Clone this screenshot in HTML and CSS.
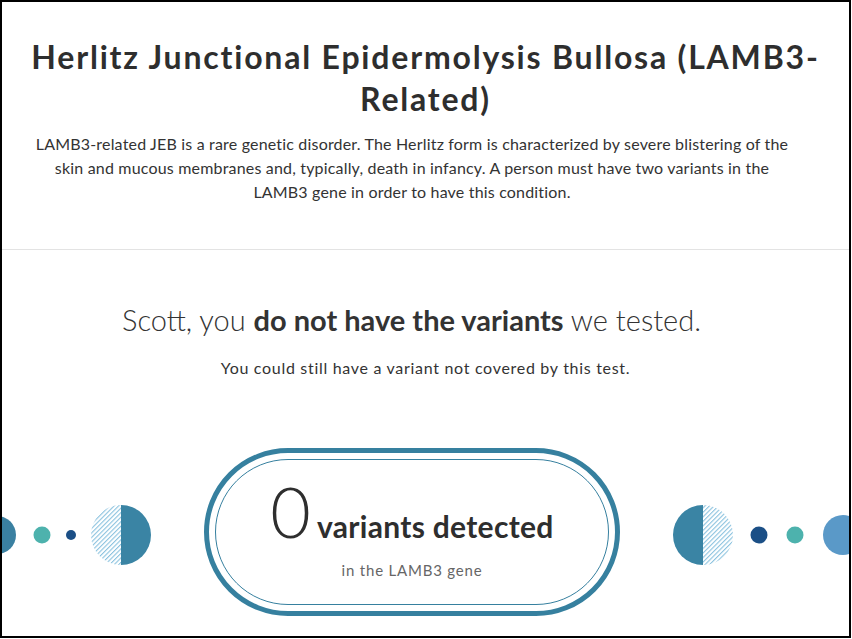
FILE: index.html
```html
<!DOCTYPE html>
<html lang="en">
<head>
<meta charset="utf-8">
<title>Herlitz Junctional Epidermolysis Bullosa</title>
<link rel="stylesheet" href="styles.css">
</head>
<body>
<div class="frame">
  <header class="intro">
    <h1 class="title">Herlitz Junctional Epidermolysis Bullosa (LAMB3-<br>Related)</h1>
    <p class="desc">LAMB3-related JEB is a rare genetic disorder. The Herlitz form is characterized by severe blistering of the skin and mucous membranes and, typically, death in infancy. A person must have two variants in the LAMB3 gene in order to have this condition.</p>
  </header>
  <main class="result">
    <p class="headline">Scott, you <strong>do not have the variants</strong> we tested.</p>
    <p class="note">You could still have a variant not covered by this test.</p>
    <div class="pill-row">
      <svg class="deco" width="202" height="80" viewBox="0 0 202 80">
        <defs>
          <pattern id="hatchL" width="3.2" height="3.2" patternUnits="userSpaceOnUse" patternTransform="rotate(45)">
            <rect width="3.2" height="3.2" fill="#fff"/>
            <rect width="1.1" height="3.2" fill="#8cc3df"/>
          </pattern>
        </defs>
        <circle cx="-5" cy="40" r="19" fill="#3a80a1"/>
        <circle cx="40" cy="40" r="8.5" fill="#4db2ad"/>
        <circle cx="69" cy="40" r="5" fill="#1b4f86"/>
        <path d="M119 10 A30 30 0 0 0 119 70 Z" fill="url(#hatchL)"/>
        <path d="M119 10 A30 30 0 0 1 119 70 Z" fill="#3a84a4"/>
      </svg>
      <div class="pill">
        <div class="pill-inner">
          <div class="count"><span class="num">0</span><span class="count-label">variants detected</span></div>
          <div class="gene">in the LAMB3 gene</div>
        </div>
      </div>
      <svg class="deco" width="229" height="80" viewBox="0 0 229 80">
        <defs>
          <pattern id="hatchR" width="3.2" height="3.2" patternUnits="userSpaceOnUse" patternTransform="rotate(45)">
            <rect width="3.2" height="3.2" fill="#fff"/>
            <rect width="1.1" height="3.2" fill="#8cc3df"/>
          </pattern>
        </defs>
        <path d="M83 10 A30 30 0 0 0 83 70 Z" fill="#3a84a4"/>
        <path d="M83 10 A30 30 0 0 1 83 70 Z" fill="url(#hatchR)"/>
        <circle cx="139" cy="40" r="8.5" fill="#1b4f86"/>
        <circle cx="175" cy="40" r="8.5" fill="#4db2ad"/>
        <circle cx="223" cy="40" r="20" fill="#5a99c8"/>
      </svg>
    </div>
  </main>
</div>
</body>
</html>
```
FILE: styles.css
```css
* { box-sizing: border-box; }
html, body { margin: 0; padding: 0; background: #fff; }
body { font-family: Lato, "Open Sans", sans-serif; color: #333; }
.frame {
  width: 851px;
  height: 638px;
  border: 2px solid #000;
  overflow: hidden;
  background: #fff;
}
.intro {
  border-bottom: 1px solid #e3e3e3;
  padding: 34px 20px 0;
  height: 248px;
}
.title {
  margin: 0;
  text-align: center;
  font-size: 32px;
  font-weight: 700;
  letter-spacing: 1.8px;
  line-height: 42px;
  color: #2e2e2e;
}
.desc {
  margin: 12px 0 0;
  padding: 0 34px 0 7px;
  text-align: center;
  font-size: 16px;
  letter-spacing: 0.18px;
  line-height: 24px;
  color: #333;
}
.result { display: flex; flex-direction: column; align-items: center; }
.headline {
  margin: 52px 28px 0 0;
  font-size: 29px;
  font-weight: 300;
  line-height: 36px;
  color: #333;
}
.headline strong { font-weight: 700; }
.note {
  margin: 20px 0 0;
  font-size: 16px;
  letter-spacing: 0.7px;
  line-height: 20px;
  color: #333;
}
.pill-row {
  align-self: stretch;
  margin-top: 70px;
  display: grid;
  grid-template-columns: 202px 416px 1fr;
  align-items: center;
}
.deco { display: block; margin-top: 5px; }
.pill {
  height: 168px;
  border: 5px solid #36809f;
  border-radius: 84px;
  padding: 6px;
}
.pill-inner {
  height: 100%;
  border: 1px solid #36809f;
  border-radius: 78px;
  display: flex;
  flex-direction: column;
  align-items: center;
  justify-content: center;
  padding-bottom: 9px;
}
.count { display: flex; align-items: baseline; gap: 6px; }
.num { font-size: 70px; font-weight: 300; line-height: 70px; color: #2e2e2e; }
.count-label { font-size: 30px; font-weight: 700; letter-spacing: 0.3px; color: #2e2e2e; }
.gene { margin-top: 15px; font-size: 15px; letter-spacing: 0.8px; color: #666; }
```
